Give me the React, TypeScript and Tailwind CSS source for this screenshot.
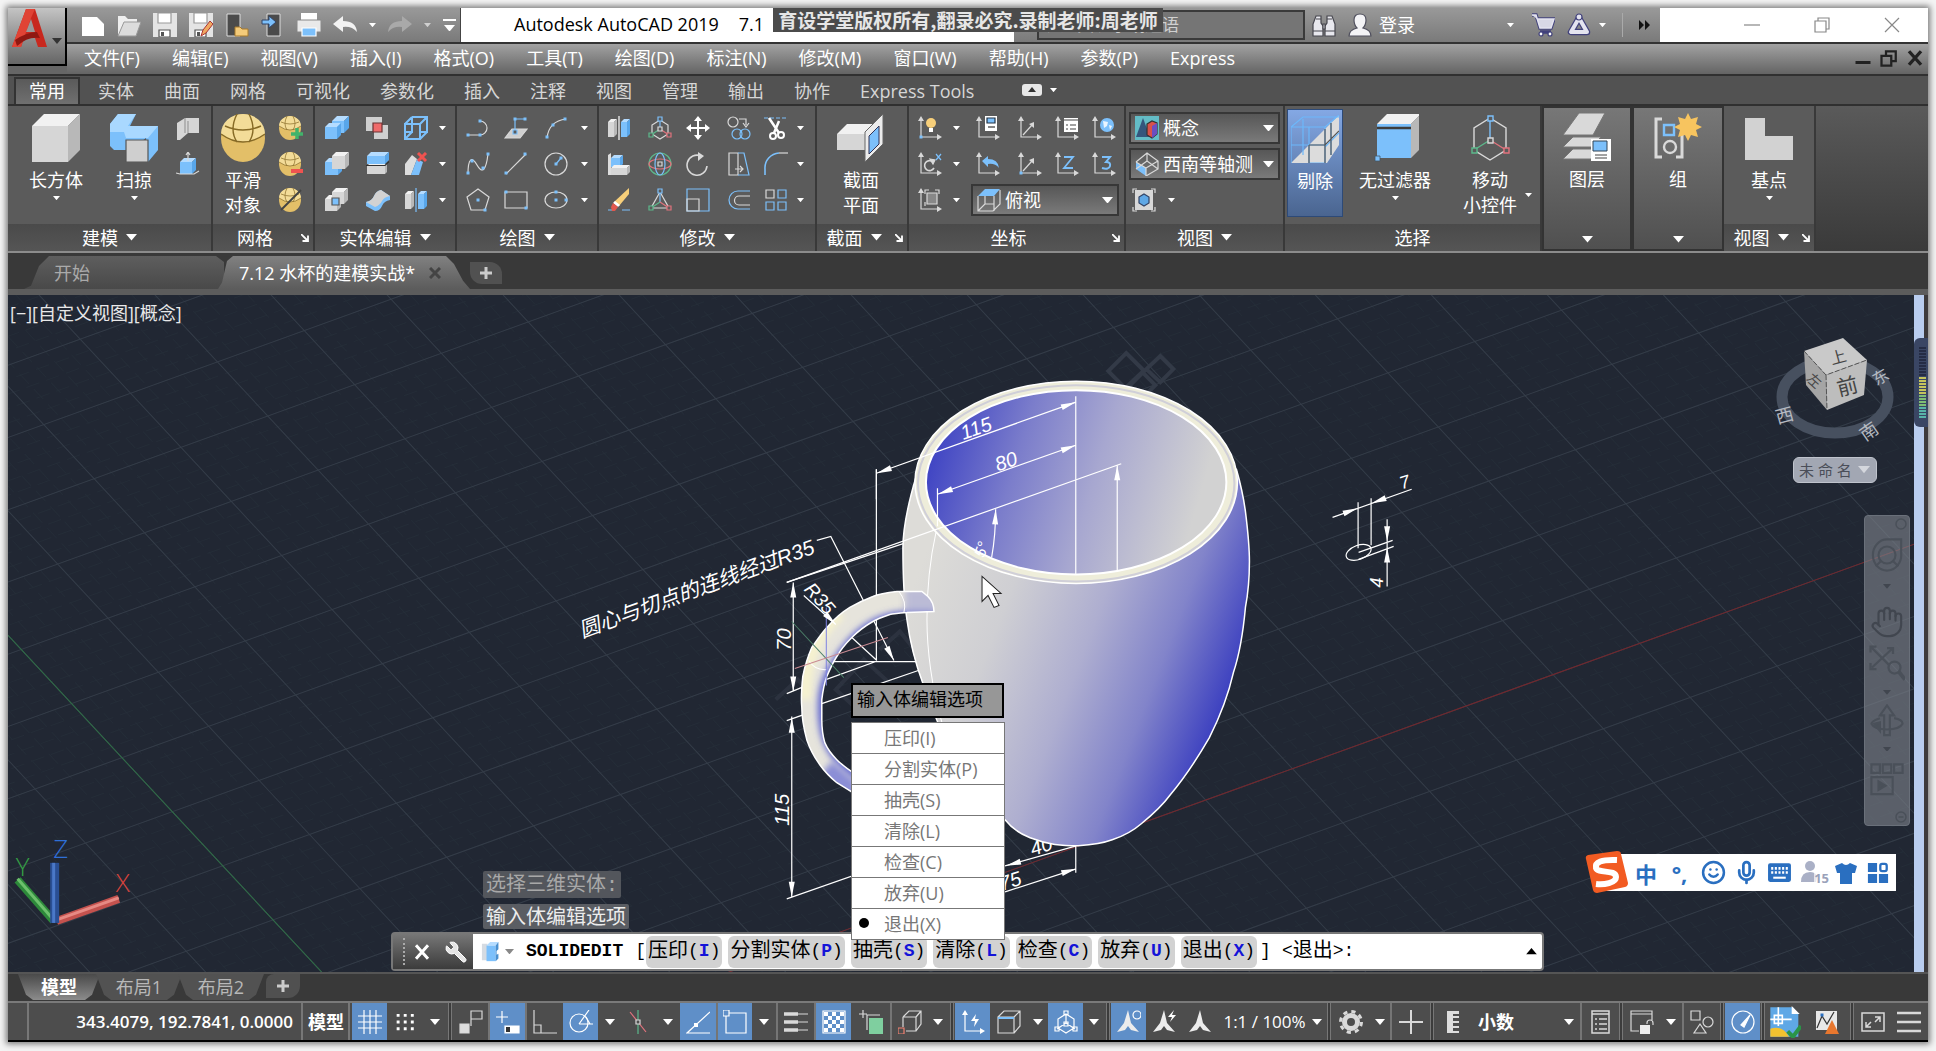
import type { ReactNode } from "react";
import { Wrench, Hand, Mic, Smile } from "lucide-react";

const BLUE = "#7cc0fb";
const GREY = "#d9d9d9";
const GOLD = "#e3bf68";

/* ---------- small building blocks ---------- */

function Ico({ children, className = "size-6", box = 24 }: { children: ReactNode; className?: string; box?: number }) {
  return (
    <svg viewBox={`0 0 ${box} ${box}`} className={`${className} shrink-0`} fill="none" stroke={GREY} strokeWidth={1.2} aria-hidden="true">
      {children}
    </svg>
  );
}

function Caret({ className = "w-2" }: { className?: string }) {
  return (
    <svg viewBox="0 0 10 6" className={`${className} shrink-0`} aria-hidden="true">
      <path d="M0 0h10L5 6z" fill="currentColor" />
    </svg>
  );
}

function Launcher() {
  return (
    <svg viewBox="0 0 8 8" className="size-2 shrink-0" aria-hidden="true">
      <path d="M0 0l6 6M7 1.500v5.500h-5.500" stroke="#fff" strokeWidth="1.800" fill="none" />
    </svg>
  );
}

function Tool({ label, children }: { label: string; children: ReactNode }) {
  return (
    <button type="button" aria-label={label} className="flex h-9 items-center justify-center">
      {children}
    </button>
  );
}

function CaretTool({ label }: { label: string }) {
  return (
    <Tool label={label}>
      <Caret className="w-[7px]" />
    </Tool>
  );
}

function Big({ icon, lines, caret, className }: { icon: ReactNode; lines: string[]; caret?: boolean; className: string }) {
  return (
    <button type="button" className={`flex flex-col items-center pt-2 leading-[25px] ${className}`}>
      {icon}
      <span className="mt-[6px] whitespace-nowrap">
        {lines.map((line) => (
          <span key={line} className="block">
            {line}
          </span>
        ))}
      </span>
      {caret && <Caret className="mt-[3px] w-[7px]" />}
    </button>
  );
}

interface PanelProps {
  title: string;
  caret?: boolean;
  launcher?: boolean;
  className: string;
  children: ReactNode;
}

function Panel({ title, caret, launcher, className, children }: PanelProps) {
  return (
    <section className={`flex shrink-0 flex-col border-r-2 border-[#393939] bg-[#5b5b5b] ${className}`}>
      <div className="flex flex-1">{children}</div>
      <div className="flex h-[27px] items-center justify-center gap-2 bg-linear-to-b from-[#4a4a4a] to-[#555] px-1">
        <span className={`flex items-center justify-center gap-2 ${launcher ? "flex-1" : ""}`}>
          {title}
          {caret && <Caret className="w-[11px]" />}
        </span>
        {launcher && <Launcher />}
      </div>
    </section>
  );
}

/* ---------- icon drawings ---------- */

const Doc = ({ fill = "#fff" }: { fill?: string }) => <path d="M1 4h15l7 7v12H1z" fill={fill} stroke="none" />;

const Floppy = () => (
  <>
    <path d="M0 0h24v24H0z" fill="#e4e4e4" stroke="none" />
    <path d="M5 0h13v10H5z" fill="#fff" stroke="#999" />
    <path d="M6 17h11v7H6z" fill="#fff" stroke="#555" />
    <path d="M8 19h3v4H8z" fill="#555" stroke="none" />
  </>
);

const Phone = () => <path d="M6 1h13v22H6z" fill="#4b4b4b" stroke="#ddd" strokeWidth="1" />;

const Cube = ({ x = 3, y = 3, s = 14, d = 4, f = "#d6d6d6", side = "#b8b8b8", top = "#f1f1f1" }) => (
  <g stroke="none">
    <path d={`M${x} ${y + d}h${s}v${s}h${-s}z`} fill={f} />
    <path d={`M${x} ${y + d}l${d} ${-d}h${s}l${-d} ${d}z`} fill={top} />
    <path d={`M${x + s} ${y + d}l${d} ${-d}v${s}l${-d} ${d}z`} fill={side} />
  </g>
);
const BlueCube = ({ x = 3, y = 3, s = 14, d = 4 }) => <Cube x={x} y={y} s={s} d={d} f="#7cc0fb" side="#58a6ea" top="#b5dcff" />;

/* flat slab: w wide, h high, with a skewed top and side */
const Slab = ({ x = 0, y = 0, w = 18, h = 8, d = 4, blue = false }) => (
  <g stroke="none">
    <path d={`M${x} ${y + d}h${w}v${h}h${-w}z`} fill={blue ? "#7cc0fb" : "#d6d6d6"} />
    <path d={`M${x} ${y + d}l${d} ${-d}h${w}l${-d} ${d}z`} fill={blue ? "#b5dcff" : "#f1f1f1"} />
    <path d={`M${x + w} ${y + d}l${d} ${-d}v${h}l${-d} ${d}z`} fill={blue ? "#58a6ea" : "#b8b8b8"} />
  </g>
);

const Egg = () => (
  <g stroke="none">
    <ellipse cx="11" cy="12" rx="11" ry="12" fill={GOLD} />
    <path d="M0 10a11 10 0 0122 0q-11 8-22 0z" fill="#f3dc98" />
    <path d="M0 10q11 8 22 0M8 0q-4 8 0 14M14 0q4 8 0 14M2 6q9 4 18 0" stroke="#866a26" strokeWidth="0.700" fill="none" />
  </g>
);

const Node = ({ x, y, c = BLUE }: { x: number; y: number; c?: string }) => <path d={`M${x - 1.5} ${y - 1.5}h3v3h-3z`} fill={c} stroke="none" />;
const Box = ({ x, y, c = BLUE }: { x: number; y: number; c?: string }) => <path d={`M${x - 2} ${y - 2}h4v4h-4z`} fill="#5b5b5b" stroke={c} />;

/* L-shaped axis pair that all the UCS tools share */
const Axes = () => (
  <>
    <path d="M3 3v18h18" />
    <path d="M0 5l3-5 3 5zM19 18l5 3-5 3z" fill={GREY} stroke="none" />
  </>
);

const Gizmo = () => (
  <>
    <path d="M12 4l8 5v9l-8 5-8-5V9z" />
    <path d="M12 3v10" stroke={BLUE} />
    <path d="M12 13l-9 6" stroke="#5cb98c" />
    <path d="M12 13l9 6" stroke="#e2737d" />
    <Box x={12} y={3} />
    <Box x={3} y={19} c="#5cb98c" />
    <Box x={21} y={19} c="#e2737d" />
    <Box x={12} y={13} c={GREY} />
  </>
);

const solidEditIcons: [string, ReactNode][] = [
  ["并集", <><BlueCube x={7} y={0} s={12} d={5} /><BlueCube x={0} y={7} s={12} d={4} /></>],
  ["干涉", <><path d="M0 1h16v14H0zM8 9h14v14H8z" fill="#cfcfcf" stroke="none" /><path d="M7 7h9v9H7z" fill="#ef6a6a" stroke="#6b3333" /></>],
  ["提取边", <path d="M1 8h15v15H1zM8 1h15v15h-7M1 8l7-7M16 8l7-7M16 23l7-7M8 1v15H1M8 16l-7 7" stroke={BLUE} strokeWidth="2" />],
  ["差集", <><BlueCube x={0} y={6} s={13} /><Cube x={7} y={0} s={13} /></>],
  ["剖切", <><Slab x={1} y={12} h={8} d={2} /><Slab x={1} y={0} h={8} blue /><path d="M0 13.500h19l4-4" stroke="#333" /></>],
  ["删除面", <><path d="M1 23V12l7-9 5 4-6 16z" fill="#ddd" stroke="none" /><path d="M7 23l6-16 6 3-4 13z" fill={BLUE} stroke="none" /><path d="M14 1l8 8M22 1l-8 8" stroke="#ef5350" strokeWidth="3" /></>],
  ["交集", <><Cube x={0} y={7} s={12} /><Cube x={7} y={0} s={12} /><path d="M7 10h7v7H7z" fill={BLUE} stroke="#555" /></>],
  ["加厚", <><path d="M0 14q6-1 8-6t7-6l9 6v4q-6 1-8 6t-7 5l-9-5z" fill={BLUE} stroke="none" /><path d="M0 14q6-1 8-6t7-6l9 6q-6 1-8 5t-7 6z" fill="#d2d2d2" stroke="none" /></>],
  ["分割", <><Slab x={1} y={3} w={6} h={15} d={3} /><Slab x={14} y={3} w={6} h={15} d={3} blue /><path d="M12 0v24" stroke={BLUE} /></>],
];

const drawIcons: [string, ReactNode][] = [
  ["多段线", <><path d="M2 19h12a7 7 0 000-14" /><Node x={2} y={19} /><Node x={14} y={19} /><Node x={14} y={5} /></>],
  ["拉伸面", <><path d="M1 22l7-9h15l-7 9z" fill="#cfcfcf" /><path d="M11 17V3h11" stroke={BLUE} /><Node x={11} y={3} /><Node x={21} y={3} /><Box x={11} y={16} /></>],
  ["圆弧", <><path d="M3 22Q5 5 22 3" /><Node x={3} y={21} /><Node x={9} y={9} /><Node x={21} y={3} /></>],
  ["样条曲线", <><path d="M2 22C2 6 6 4 11 13s9 6 11-11" /><Node x={2} y={21} /><Node x={6} y={9} /><Node x={17} y={16} /><Node x={22} y={2} /></>],
  ["直线", <><path d="M2 22L22 2" /><Node x={2} y={21} /><Node x={21} y={2} /></>],
  ["圆", <><circle cx="12" cy="12" r="11" /><path d="M12 12l5-6" stroke={BLUE} /><Node x={12} y={12} /><Node x={17} y={6} /></>],
  ["多边形", <><path d="M12 1l11 8-4 13H5L1 9z" /><Node x={12} y={12} /><Node x={19} y={22} /></>],
  ["矩形", <><path d="M1 4h22v16H1z" /><Node x={2} y={4} /><Node x={22} y={20} /></>],
  ["椭圆", <><ellipse cx="12" cy="12" rx="11" ry="8" /><Node x={12} y={12} /><Node x={12} y={4} /><Node x={22} y={12} /></>],
];

const modifyIcons: [string, ReactNode][] = [
  ["三维镜像", <><Slab x={1} y={3} w={6} h={15} d={3} /><Slab x={14} y={3} w={6} h={15} d={3} blue /><path d="M12 0v24" stroke="#fff" /></>],
  ["三维移动", <Gizmo />],
  ["移动", <path d="M12 0l4 5h-3v6h6V8l5 4-5 4v-3h-6v6h3l-4 5-4-5h3v-6H5v3l-5-4 5-4v3h6V5H8z" fill="#fff" stroke="none" />],
  ["复制", <><circle cx="6" cy="6" r="5" /><path d="M12 3h7v6M16 7l3 4 3-4" /><circle cx="10" cy="18" r="5" stroke={BLUE} /><circle cx="18" cy="18" r="5" stroke={BLUE} /></>],
  ["修剪", <><path d="M0 2h24" stroke={BLUE} strokeDasharray="4 2" /><path d="M5 2l10 15M15 5l-5 12" stroke="#fff" strokeWidth="2.500" /><circle cx="9" cy="20" r="3" stroke="#fff" strokeWidth="2" /><circle cx="17" cy="19" r="3" stroke="#fff" strokeWidth="2" /></>],
  ["三维对齐", <><path d="M1 3v20h3V1z" fill="#ddd" stroke="none" /><BlueCube x={4} y={3} s={9} d={3} /><Slab x={4} y={13} w={16} h={7} d={3} /></>],
  ["三维旋转", <><circle cx="12" cy="12" r="11" stroke="#5cb98c" /><ellipse cx="12" cy="12" rx="11" ry="5" stroke="#e2737d" /><ellipse cx="12" cy="12" rx="5" ry="11" stroke={BLUE} /><Box x={12} y={12} c={GREY} /></>],
  ["旋转", <><path d="M15 4A10 10 0 1021 14" strokeWidth="1.600" /><path d="M12 0l6 4-6 5z" fill={GREY} stroke="none" /></>],
  ["拉伸", <><path d="M2 1h9v22H2zM8 17h8M13 14l3 3-3 3" /><path d="M11 1h6l5 22H11" stroke={BLUE} /></>],
  ["圆角", <><path d="M1 23V17A15 15 0 0115 1" stroke={BLUE} strokeWidth="1.600" /><path d="M15 1h9" /></>],
  ["删除", <><path d="M1 22h5M15 22h8" stroke={BLUE} /><path d="M22 0v6L12 18l-5-4z" fill="#f7cf7a" stroke="none" /><path d="M8 13l5 4-2 2-5-4z" fill="#fff" stroke="none" /><path d="M6 15l5 4-3 4H5l-1-4z" fill="#e2574d" stroke="none" /></>],
  ["三维缩放", <><path d="M12 4L3 20h18z" /><path d="M12 4v10" stroke={BLUE} /><path d="M12 14l-9 6" stroke="#5cb98c" /><path d="M12 14l9 6" stroke="#e2737d" /><Box x={12} y={3} /><Box x={3} y={20} c="#5cb98c" /><Box x={21} y={20} c="#e2737d" /></>],
  ["缩放", <><path d="M1 1h22v22H1z" stroke={BLUE} /><path d="M1 11h12v12H1z" /></>],
  ["偏移", <><path d="M23 3H11a9 9 0 000 18h12" stroke={BLUE} /><path d="M23 8H12a4.500 4.500 0 000 9h11" /></>],
  ["阵列", <><path d="M2 2h8v8H2z" /><path d="M14 2h8v8h-8zM2 14h8v8H2zM14 14h8v8h-8z" stroke={BLUE} /></>],
];

const ucsIcons: [string, ReactNode][] = [
  ["UCS 图标", <><Axes /><circle cx="13" cy="7" r="5" fill="#f7cf7a" stroke="none" /><path d="M11 12h4v4h-4z" fill="#fff" stroke="none" /><Node x={3} y={21} /></>],
  ["命名 UCS", <><Axes /><path d="M9 0h12v15H9z" fill="#fff" stroke="none" /><path d="M11 2h8v5h-8z" fill={BLUE} stroke="#234" /><path d="M12 11h7" stroke="#333" /></>],
  ["视图 UCS", <><Axes /><path d="M5 19l9-10" /><path d="M16 6v6l-5-4z" fill={GREY} stroke="none" /></>],
  ["UCS 列表", <><Axes /><path d="M9 2h14v14H9z" fill="#fff" stroke="none" /><path d="M9 4h14M11 9h2M15 9h6M11 13h2M15 13h6" stroke="#444" /></>],
  ["世界", <><Axes /><circle cx="15" cy="9" r="7" fill={BLUE} stroke="none" /><path d="M11 5l5 1-1 4-3 2zM17 9l3 1-2 4z" fill="#e9f5ff" stroke="none" /></>],
  ["X", <><Axes /><path d="M15 10a5 5 0 101 6" strokeWidth="1.600" /><path d="M12 7l5 1-2 4z" fill={GREY} /><path d="M18 2l5 6M23 2l-5 6" stroke={BLUE} /></>],
  ["上一个", <><Axes /><path d="M6 9l6-5v3q10 0 11 9-4-5-11-4v3z" fill={BLUE} stroke="none" /></>],
  ["原点", <><Axes /><path d="M5 19l9-10" /><path d="M16 6v6l-5-4z" fill={GREY} stroke="none" /><Node x={3} y={21} /></>],
  ["Z 轴矢量", <><Axes /><path d="M9 5h9l-9 11h9" stroke={BLUE} strokeWidth="1.800" /></>],
  ["三点", <><Axes /><path d="M10 5h8l-4 5q5 0 4 4t-8 2" stroke={BLUE} strokeWidth="2" /></>],
];

/* ---------- header ---------- */

const menus = ["文件(F)", "编辑(E)", "视图(V)", "插入(I)", "格式(O)", "工具(T)", "绘图(D)", "标注(N)", "修改(M)", "窗口(W)", "帮助(H)", "参数(P)", "Express"];
const ribbonTabs = ["常用", "实体", "曲面", "网格", "可视化", "参数化", "插入", "注释", "视图", "管理", "输出", "协作", "Express Tools"];

function QuickAccess() {
  const items: [string, ReactNode][] = [
    ["新建", <Doc />],
    ["打开", <><path d="M1 22V3h7l3 3h9v4" fill="#eee" stroke="none" /><path d="M1 23L7 9h17l-5 14z" fill="#dcdcdc" stroke="#999" strokeWidth="1" /></>],
    ["保存", <Floppy />],
    ["另存为", <><Floppy /><path d="M12 23l2-6 7-9 3 3-7 9z" fill="#f0a860" stroke="#a33" strokeWidth="1" /></>],
    ["从移动设备打开", <><g transform="translate(-4)"><Phone /></g><path d="M10 14h5l2 2h6v7H10z" fill="#f4cb7a" stroke="#a87a2c" strokeWidth="1" /></>],
    ["保存到移动设备", <><Phone /><path d="M1 7h7V3l7 6-7 6v-4H1z" fill={BLUE} stroke="#346" strokeWidth="1" /></>],
    ["打印", <><path d="M4 0h16v7H4z" fill="#fff" stroke="none" /><path d="M0 7h24v12H0z" fill="#e9e9e9" stroke="#888" strokeWidth="1" /><path d="M5 15h14v8H5z" fill={BLUE} stroke="#fff" /></>],
    ["放弃", <path d="M0 11l10-8v5q13 0 14 11-5-6-14-5v5z" fill="#f2f2f2" stroke="none" />],
  ];
  return (
    <div className="flex w-[393px] shrink-0 items-center pl-[14px] text-white">
      {items.map(([label, icon]) => (
        <button key={label} type="button" aria-label={label} className="mr-3">
          <Ico>{icon}</Ico>
        </button>
      ))}
      <Caret className="w-[7px]" />
      <button type="button" aria-label="重做" className="mx-3">
        <Ico>
          <path d="M24 11L14 3v5Q1 8 0 19q5-6 14-5v5z" fill="#a9a9a9" stroke="none" />
        </Ico>
      </button>
      <Caret className="w-[7px] text-[#d0d0d0]" />
      <button type="button" aria-label="自定义快速访问工具栏" className="ml-3 flex w-[13px] flex-col items-center gap-1">
        <span className="h-[2px] w-full bg-white" />
        <Caret className="w-[11px]" />
      </button>
    </div>
  );
}

function TitleBar() {
  return (
    <div className="relative flex h-[34px] bg-linear-to-b from-[#999] to-[#7a7a7a]">
      <QuickAccess />
      <h1 className="flex w-[554px] shrink-0 gap-[20px] border-l border-[#444] bg-white pl-[53px] text-[18px] leading-[32px] whitespace-nowrap text-black">
        <span>Autodesk AutoCAD 2019</span>
        <span>7.1</span>
      </h1>
      <input
        aria-label="搜索"
        placeholder="键入关键字或短语"
        className="my-[2px] ml-[23px] w-[268px] shrink-0 border-2 border-[#3a3a3a] bg-[#757575] px-1 text-[17px] placeholder:text-[#d0d0d0]"
      />
      <div className="flex flex-1 items-center pl-[7px] text-white">
        <Ico>
          <g fill="#e8e8ee" stroke="#46464e">
            <path d="M4 3h5v7l2 3v10H1V11z" />
            <path d="M20 3h-5v7l-2 3v10h10V11z" />
            <path d="M11 11h2v5h-2z" />
            <path d="M1 18h10M13 18h10M4 6h5M15 6h5" />
          </g>
        </Ico>
        <Ico className="ml-3 size-6">
          <path d="M1 23q0-6 8-8-3-3-3-8 0-6 6-6t6 6q0 5-3 8 8 2 8 8z" fill="#f3f3f6" stroke="#50505e" />
        </Ico>
        <a href="#login" className="ml-[7px] text-[18px]">登录</a>
        <Caret className="ml-[92px] w-[7px]" />
        <Ico className="ml-[17px] size-6">
          <path d="M1 2h4l4 13h11l3-9H6M9 19h11" stroke="#42427c" strokeWidth="3.500" />
          <path d="M1 2h4l4 13h11l3-9H6" stroke="#e4e4f0" strokeWidth="1.500" fill="#d8d8e6" />
          <circle cx="10" cy="21" r="2" fill="#fff" stroke="#42427c" />
          <circle cx="19" cy="21" r="2" fill="#fff" stroke="#42427c" />
        </Ico>
        <Ico className="ml-3 size-6">
          <path d="M12 5L4 19h16z" stroke="#42427c" strokeWidth="6.500" strokeLinejoin="round" />
          <path d="M12 5L4 19h16z" stroke="#e4e4f0" strokeWidth="4" strokeLinejoin="round" />
          <circle cx="12" cy="4" r="3" fill="#e4e4f0" stroke="#42427c" />
        </Ico>
        <Caret className="ml-2 w-[7px]" />
        <span className="mx-4 h-6 w-px bg-[#aaa]" />
        <svg viewBox="0 0 12 10" className="w-3" aria-hidden="true">
          <path d="M0 0l5 5-5 5zM6 0l5 5-5 5z" fill="#111" />
        </svg>
      </div>
      <div className="flex w-[268px] shrink-0 items-center justify-end gap-[54px] bg-white pr-[28px]">
        <button type="button" aria-label="最小化"><Ico className="size-4" box={16}><path d="M0 8h16" stroke="#888" /></Ico></button>
        <button type="button" aria-label="还原"><Ico className="size-4" box={16}><path d="M1 4h11v11H1zM4 4V1h11v11h-3" stroke="#888" /></Ico></button>
        <button type="button" aria-label="关闭"><Ico className="size-4" box={16}><path d="M1 1l14 14M15 1L1 15" stroke="#888" /></Ico></button>
      </div>
      <p className="absolute top-0 left-[706px] flex h-6 w-[390px] items-center justify-center bg-[#4b4b4b] font-['Noto_Sans_CJK_SC',sans-serif] text-[19px] font-bold whitespace-nowrap text-[#e6e6e6]">
        育设学堂版权所有,翻录必究.录制老师:周老师
      </p>
    </div>
  );
}

function Header() {
  return (
    <header className="flex bg-[#666]">
      <button
        type="button"
        aria-label="应用程序菜单"
        className="z-10 flex h-[58px] w-[59px] shrink-0 items-start border-r-2 border-b-2 border-black bg-linear-to-b from-[#c4c4c4] to-[#666] pl-1 text-[#333]"
      >
        <svg viewBox="0 0 36 40" className="w-9" aria-hidden="true">
          <path d="M14 1h9l12 38h-9l-3-9H12L9 39H0z" fill="#c8281e" />
          <path d="M14 1h9l-4 9-7 20L9 39H0z" fill="#e04335" />
          <path d="M19 11l4 13H14z" fill="#9a9a9a" />
          <path d="M3 32q12-8 22-8l3 6q-12-2-23 8z" fill="#8f1812" />
        </svg>
        <Caret className="mt-[30px] ml-1 w-[10px]" />
      </button>
      <div className="flex min-w-0 flex-1 flex-col">
        <TitleBar />
        <nav className="flex h-[32px] items-center gap-[32px] border-t-2 border-[#333] bg-linear-to-b from-[#a2a2a2] to-[#646464] pb-[3px] pl-[17px] text-[18px] leading-none text-white">
          {menus.map((menu) => (
            <button key={menu} type="button" className="whitespace-nowrap">{menu}</button>
          ))}
          <span className="ml-auto flex gap-2 pr-1">
            <Ico className="size-[18px]"><path d="M2 18h20" stroke="#222" strokeWidth="4" /></Ico>
            <Ico className="size-[18px]"><path d="M2 9h13v13H2zM8 8V3h13v13h-5" stroke="#222" strokeWidth="3" /></Ico>
            <Ico className="size-[18px]"><path d="M4 3l16 18M20 3L4 21" stroke="#222" strokeWidth="4.500" /></Ico>
          </span>
        </nav>
      </div>
    </header>
  );
}

function RibbonTabs() {
  return (
    <nav className="flex h-[32px] items-end border-t-2 border-b-2 border-[#303030] bg-[#525252] pl-[6px] text-[18px] leading-[25px] text-[#d6d6d6]">
      {ribbonTabs.map((tab, i) => (
        <button
          key={tab}
          type="button"
          className={
            i === 0
              ? "mr-[3px] border-2 border-b-0 border-[#333] bg-linear-to-b from-[#5a5a5a] to-[#707070] px-[13px] text-white"
              : "px-[15px] whitespace-nowrap"
          }
        >
          {tab}
        </button>
      ))}
      <span className="flex h-full items-center gap-2 pl-[33px] text-white">
        <svg viewBox="0 0 20 12" className="w-5" aria-hidden="true">
          <rect width="20" height="12" rx="3" fill="#e8e8e8" />
          <path d="M6 8l4-5 4 5z" fill="#333" />
        </svg>
        <Caret className="w-[7px]" />
      </span>
    </nav>
  );
}

/* ---------- ribbon ---------- */

function Combo({ label, options, icon, className }: { label: string; options: string[]; icon: ReactNode; className: string }) {
  return (
    <label className={`flex h-[32px] items-center gap-1 border-2 border-[#373737] bg-linear-to-b from-[#575757] to-[#7a7a7a] pl-1 ${className}`}>
      {icon}
      <select aria-label={label} className="min-w-0 flex-1 appearance-none bg-transparent leading-none text-white outline-none">
        {options.map((o) => (
          <option key={o}>{o}</option>
        ))}
      </select>
      <Caret className="mr-1 w-[11px]" />
    </label>
  );
}

function IconRows({ icons, cols, className }: { icons: [string, ReactNode][]; cols: number; className: string }) {
  return (
    <div className={`grid content-start pt-1 ${className}`}>
      {icons.map(([label, icon], i) => (
        <div key={label} className="contents">
          <Tool label={label}><Ico>{icon}</Ico></Tool>
          {i % cols === cols - 1 && <CaretTool label={`${label}选项`} />}
        </div>
      ))}
    </div>
  );
}

function Ribbon() {
  return (
    <div className="flex h-[147px] overflow-hidden border-b-2 border-[#8c8c8c] bg-linear-to-b from-[#5a5a5a] to-[#3a3a3a] text-[18px] leading-none text-white">
      <Panel title="建模" caret className="w-[205px]">
        <Big
          className="w-[96px]"
          lines={["长方体"]}
          caret
          icon={<Ico className="size-12"><Cube x={0} y={0} s={18} d={6} /></Ico>}
        />
        <Big
          className="w-[60px]"
          lines={["扫掠"]}
          caret
          icon={
            <Ico className="size-12">
              <path d="M0 5l4-5h9l-3 6h14v12l-5 6-1-12-8 6H2l-2-2z" fill={BLUE} stroke="none" />
              <path d="M0 5l4-5h9l-4 6h15l-5 6H8l-1-3H0z" fill="#a9d8ff" stroke="none" />
              <path d="M8 13h11v11H8z" fill="#cfcfcf" stroke="#555" strokeWidth="0.600" />
            </Ico>
          }
        />
        <div className="flex w-[47px] flex-col pt-1">
          <Tool label="多段体"><Ico><path d="M1 7l8-5h14v15H12l-8 7H1z" fill="#d6d6d6" stroke="none" /><path d="M9 2v15M12 5v12" stroke="#999" /></Ico></Tool>
          <Tool label="按住并拖动"><Ico><BlueCube x={4} y={6} s={12} /><path d="M0 21l4 1h14l5-3M12 9V1M10 3l2-3 2 3" /></Ico></Tool>
        </div>
      </Panel>

      <Panel title="网格" launcher className="w-[102px]">
        <Big
          className="w-[60px]"
          lines={["平滑", "对象"]}
          icon={<Ico className="size-12"><g transform="translate(1)"><Egg /></g></Ico>}
        />
        <div className="flex w-[36px] flex-col pt-1">
          <Tool label="提高平滑度"><Ico><Egg /><path d="M18 12v11M12 18h12" stroke="#41b36b" strokeWidth="3.500" /></Ico></Tool>
          <Tool label="降低平滑度"><Ico><Egg /><path d="M12 19h12" stroke="#ef5350" strokeWidth="4" /></Ico></Tool>
          <Tool label="优化网格"><Ico><Egg /><path d="M2 22L22 2" stroke="#444" strokeWidth="2" /></Ico></Tool>
        </div>
      </Panel>

      <Panel title="实体编辑" caret className="w-[142px]">
        <IconRows icons={solidEditIcons} cols={3} className="grid-cols-[44px_38px_38px_14px]" />
      </Panel>

      <Panel title="绘图" caret className="w-[142px]">
        <IconRows icons={drawIcons} cols={3} className="grid-cols-[42px_34px_46px_10px]" />
      </Panel>

      <Panel title="修改" caret className="w-[218px]">
        <IconRows icons={modifyIcons} cols={5} className="grid-cols-[40px_42px_34px_48px_26px_22px]" />
      </Panel>

      <Panel title="截面" caret launcher className="w-[92px]">
        <Big
          className="w-[88px]"
          lines={["截面", "平面"]}
          icon={
            <Ico className="size-12">
              <Slab x={0} y={5} w={14} h={8} d={5} />
              <path d="M14 9l9-9v15l-9 9z" fill="#ececec" stroke="#666" strokeWidth="0.500" />
              <path d="M16 11l5-5v9l-5 5z" fill={BLUE} stroke="#335" strokeWidth="0.500" />
            </Ico>
          }
        />
      </Panel>

      <Panel title="坐标" launcher className="w-[217px]">
        <div className="grid grid-cols-[42px_10px_54px_30px_44px_30px] content-start pt-1">
          {ucsIcons.map(([label, icon], i) => (
            <div key={label} className="contents">
              <Tool label={label}><Ico>{icon}</Ico></Tool>
              {i % 5 === 0 && <CaretTool label={`${label}选项`} />}
            </div>
          ))}
          <Tool label="三维 UCS"><Ico><Axes /><path d="M9 5h10v11H9z" fill="#888" /><path d="M7 6V2h4M17 2h4v4M7 14v4" /></Ico></Tool>
          <CaretTool label="三维 UCS 选项" />
          <Combo
            label="UCS"
            options={["俯视"]}
            className="col-span-4 ml-[10px] self-center"
            icon={<Ico><path d="M1 8L8 1h15l-6 7z" fill={BLUE} stroke="none" /><path d="M1 8v15h15l7-7V2M17 8v15M8 8v8L1 23M8 16h9" /></Ico>}
          />
        </div>
      </Panel>

      <Panel title="视图" caret className="w-[159px]">
        <div className="flex w-full flex-col gap-1 px-[3px] pt-[6px]">
          <Combo
            label="视觉样式"
            options={["概念"]}
            className="w-full"
            icon={<Ico><path d="M0 0h24v24H0z" fill="#63bcc6" stroke="none" /><path d="M8 2l7 19H1z" fill="#35567c" stroke="none" /><path d="M12 8l5-3 5 2v11l-5 4-5-3z" fill="#d8524a" stroke="#333" /><path d="M17 10v12l5-4V7z" fill="#6b4ec0" stroke="none" /></Ico>}
          />
          <Combo
            label="三维导航"
            options={["西南等轴测"]}
            className="w-full"
            icon={<Ico><path d="M1 10l10 6v8L1 17z" fill={BLUE} stroke="none" /><path d="M1 10L12 1l11 8v8l-12 7V16L1 10M11 16l12-7M12 1v8l11 8M12 9L1 17" /></Ico>}
          />
          <div className="flex h-8 items-center gap-3 pl-[3px]">
            <Ico><path d="M3 2h18v20H3z" fill="#d8d8d8" stroke="none" /><path d="M7 9l5-3 5 3v6l-5 3-5-3z" fill="#5fa8e6" stroke="#346" /><path d="M1 5V1h4M19 1h4v4M23 19v4h-4M5 23H1v-4" /></Ico>
            <Caret className="w-[7px]" />
          </div>
        </div>
      </Panel>

      <Panel title="选择" className="w-[257px]">
        <Big
          className="mt-[3px] ml-[2px] h-[108px] w-[56px] border border-[#2d4a78] bg-linear-to-b from-[#84a8e4] to-[#4a6590] pt-[5px]"
          lines={["剔除"]}
          icon={
            <Ico className="size-12">
              <path d="M0 24L24 0v15l-6 9z" fill="#dcdcdc" stroke="none" />
              <path d="M0 6h17M0 6v18M6 2v18M0 15h18M0 6l6-5h18M9 6v18M17 6v18h-8M20 4v16M17 6l7-6M17 16l7-7" stroke="#6cb8fb" strokeWidth="0.600" />
              <path d="M9 15v9M17 7v17M9 15h8l7-7M20 4v16" stroke="#555" strokeWidth="0.600" />
            </Ico>
          }
        />
        <Big
          className="w-[104px]"
          lines={["无过滤器"]}
          caret
          icon={
            <Ico className="size-12">
              <Cube x={3} y={0} s={17} d={5} />
              <path d="M3 5h17v17H3z" fill={BLUE} stroke="none" />
              <path d="M3 7h17" stroke="#3d3d3d" strokeWidth="1.200" />
              <path d="M2 21h2.500v2.500H2z" fill={BLUE} stroke="#456" strokeWidth="0.400" />
            </Ico>
          }
        />
        <Big
          className="ml-2 w-[70px]"
          lines={["移动", "小控件"]}
          icon={
            <Ico className="size-12">
              <g strokeWidth="0.700">
                <path d="M12 2l8 5v11l-8 5-8-5V7z" />
                <path d="M12 2v11" stroke={BLUE} />
                <path d="M12 13l-8 5" stroke="#5cb98c" />
                <path d="M12 13l8 5" stroke="#e2737d" />
                <path d="M11 1h2.500v2.500H11z" fill="#5b5b5b" stroke={BLUE} />
                <path d="M3 17h2.500v2.500H3z" fill="#5b5b5b" stroke="#5cb98c" />
                <path d="M19 17h2.500v2.500H19z" fill="#5b5b5b" stroke="#e2737d" />
                <path d="M11 12h2.500v2.500H11z" fill="#5b5b5b" />
              </g>
            </Ico>
          }
        />
        <Caret className="w-[7px] pt-[60px]" />
      </Panel>

      <section className="flex w-[90px] shrink-0 flex-col items-center border-2 border-[#333] bg-linear-to-b from-[#777] to-[#505050]">
        <Big
          className="w-full flex-1 pt-[5px]"
          lines={["图层"]}
          icon={
            <Ico className="size-12">
              <path d="M0 23l5-5h14l-5 5zM0 17l5-5h14l-5 5zM0 11L8 0h13l-6 11z" fill="#d9d9d9" stroke="#777" strokeWidth="0.500" />
              <path d="M14 13h10v11H14z" fill="#fff" stroke="none" />
              <path d="M15 14h7v5h-7z" fill={BLUE} stroke="#345" strokeWidth="0.500" />
              <path d="M16 21h6M16 22.500h6" stroke="#444" strokeWidth="0.500" />
            </Ico>
          }
        />
        <Caret className="mb-[6px] w-[11px]" />
      </section>
      <section className="flex w-[92px] shrink-0 flex-col items-center border-2 border-[#333] bg-linear-to-b from-[#777] to-[#505050]">
        <Big
          className="w-full flex-1 pt-[5px]"
          lines={["组"]}
          icon={
            <Ico className="size-12">
              <path d="M4 3H1v19h3M11 22h3V11" strokeWidth="1.500" />
              <path d="M5 6h5v5H5z" stroke={BLUE} />
              <circle cx="8" cy="17" r="3" />
              <path d="M17 0l1.500 3L22 2l-1 3.500 3 1.500-3 1.500 1 3.500-3.500-1L17 14l-1.500-3-3.500 1 1-3.500-3-1.500 3-1.500-1-3.500 3.500 1z" fill="#f7c45f" stroke="none" />
            </Ico>
          }
        />
        <Caret className="mb-[6px] w-[11px]" />
      </section>

      <Panel title="视图" caret launcher className="w-[92px]">
        <Big
          className="w-full"
          lines={["基点"]}
          caret
          icon={<Ico className="size-12"><path d="M0 2h10v9h14v12H0z" fill="#d2d2d2" stroke="none" /></Ico>}
        />
      </Panel>
    </div>
  );
}

function FileTabs() {
  return (
    <div className="flex h-[42px] shrink-0 items-end border-b-[6px] border-[#5c5c5c] bg-[#393939] pl-[16px] text-[18px] leading-[32px]">
      <button
        type="button"
        className="h-[33px] w-[200px] bg-linear-to-b from-[#5e5e5e] to-[#494949] pl-[30px] text-left text-[#aaa] [clip-path:polygon(0_100%,7px_90%,15px_30%,19px_6px,25px_0,calc(100%-8px)_0,100%_6px,100%_100%)]"
      >
        开始
      </button>
      <div className="-ml-[6px] flex h-[33px] w-[252px] items-center bg-linear-to-b from-[#818181] to-[#5c5c5c] pl-[21px] text-white [clip-path:polygon(0_100%,4px_80%,9px_15%,15px_0,calc(100%-24px)_0,calc(100%-16px)_8px,calc(100%-7px)_75%,100%_100%)]">
        <button type="button" className="whitespace-nowrap">7.12 水杯的建模实战*</button>
        <button type="button" aria-label="关闭图形" className="ml-[14px]">
          <Ico className="size-3"><path d="M2 2l20 20M22 2L2 22" stroke="#444" strokeWidth="6" /></Ico>
        </button>
      </div>
      <button type="button" aria-label="新图形" className="mb-[5px] flex h-[22px] w-[32px] items-center justify-center rounded-tr-xl rounded-bl-xl bg-[#515151]">
        <Ico className="size-3"><path d="M12 0v24M0 12h24" stroke="#ccc" strokeWidth="6" /></Ico>
      </button>
    </div>
  );
}

/* ---------- drawing area ---------- */

const ORIGIN = [425, 1082];
const STEP_X = [86.7, -31.3];
const STEP_Y = [50.3, 54];

function gridLine(along: number[], across: number[], n: number) {
  const x = ORIGIN[0] + across[0] * n;
  const y = ORIGIN[1] + across[1] * n;
  return `M${x - along[0] * 40} ${y - along[1] * 40}L${x + along[0] * 40} ${y + along[1] * 40}`;
}

function GridLines() {
  const steps = Array.from({ length: 190 }, (_, i) => (i - 95) / 5);
  const major = steps.filter((n) => Number.isInteger(n));
  const path = (list: number[]) => list.map((n) => gridLine(STEP_X, STEP_Y, n) + gridLine(STEP_Y, STEP_X, n)).join("");
  return (
    <g fill="none" strokeWidth="1">
      <path d={path(steps)} stroke="#252d38" strokeDasharray="14 7" />
      <path d={path(major)} stroke="#343c48" />
      <path d={gridLine(STEP_X, STEP_Y, 0)} stroke="#73272d" />
      <path d={gridLine(STEP_Y, STEP_X, 0)} stroke="#2f6e46" />
    </g>
  );
}

/* filled dimension arrow head with its tip at x, y */
function Arrow({ x, y, a }: { x: number; y: number; a: number }) {
  return <path d="M0 0L-15 3V-3z" fill="#fff" stroke="none" transform={`translate(${x} ${y}) rotate(${a})`} />;
}

function DimText({ x, y, a, children, size = 20 }: { x: number; y: number; a: number; children: string; size?: number }) {
  return (
    <text
      transform={`translate(${x} ${y}) rotate(${a})`}
      textAnchor="middle"
      dominantBaseline="central"
      fontSize={size}
      fontStyle="italic"
      fill="#fff"
      stroke="none"
      fontFamily="'Liberation Sans', 'Noto Sans CJK SC', sans-serif"
    >
      {children}
    </text>
  );
}

const BODY =
  "M916 478C908 505 903 530 903 549C903 575 904 600 907 620C911 650 917 668 923 684C938 728 956 765 976 791C990 808 998 815 1005 820C1012 829 1020 834 1030 838C1048 845 1062 846 1078 846C1092 845 1104 843 1112 840C1124 836 1133 831 1141 824C1152 815 1162 806 1170 795C1186 776 1198 757 1209 738C1220 716 1228 695 1233 673C1240 652 1243 630 1245 608C1248 592 1249 577 1249 562C1249 545 1247 528 1245 512C1243 497 1240 484 1236 470z";
const HANDLE =
  "M934 612C934 606 932 601 928 597L922 592H897C888 593 880 594 873 597C865 600 857 604 850 608C842 613 834 620 828 627C822 633 817 641 812 648C808 657 805 667 803 677C802 687 801 697 802 707C802 718 804 729 807 740C810 749 815 758 820 765C825 772 831 778 837 783L858 796V776C850 771 843 766 837 760C832 755 828 750 825 743C823 736 822 728 822 720V700C823 692 824 685 827 677C830 670 833 663 837 657C841 650 846 644 852 638C858 632 866 626 873 622C878 619 884 617 890 615C896 614 901 613 907 613z";

function Drawing() {
  return (
    <svg viewBox="8 296 1906 676" preserveAspectRatio="xMidYMid slice" className="absolute inset-0 size-full" aria-label="水杯模型">
      <defs>
        <linearGradient id="body" gradientUnits="userSpaceOnUse" x1="925" y1="555" x2="1235" y2="675">
          <stop offset="0" stopColor="#dddcd8" />
          <stop offset="0.28" stopColor="#cfcfd3" />
          <stop offset="0.55" stopColor="#aeaed0" />
          <stop offset="0.78" stopColor="#8284ca" />
          <stop offset="1" stopColor="#3d41c0" />
        </linearGradient>
        <linearGradient id="inside" gradientUnits="userSpaceOnUse" x1="935" y1="455" x2="1190" y2="530">
          <stop offset="0" stopColor="#4247c4" />
          <stop offset="0.3" stopColor="#7b7dcb" />
          <stop offset="0.6" stopColor="#a7a7d0" />
          <stop offset="1" stopColor="#d2d2d2" />
        </linearGradient>
        <clipPath id="handleClip"><path d={HANDLE} /></clipPath>
        <filter id="soft" filterUnits="userSpaceOnUse" x="780" y="560" width="180" height="260"><feGaussianBlur stdDeviation="3" /></filter>
      </defs>
      <GridLines />
      <g stroke="#333a47" strokeWidth="4" fill="none">
        <path d="M1108 372l18-18 18 18-18 18zM1128 386l14-13 13 13-13 13zM1146 370l14-13 13 13-13 13z" />
        <path d="M776 700l22-20 12 14M836 690l28-30 24 22-28 30zM880 650l20-18 16 20" opacity="0.600" />
      </g>

      <g stroke="#fff" strokeWidth="1.200" fill="none">
        <DimText x={697} y={589} a={-20} size={21}>圆心与切点的连线经过R35</DimText>
        <path d="M817 541l14-4L894 661" />
        <path d="M787 583l150-50M793.500 583v109M787 694l17-7M787 721l17-6M792 717v180M787 899l200-70" />
        <DimText x={784} y={640} a={-90}>70</DimText>
        <DimText x={782} y={810} a={-90}>115</DimText>
        <path d="M876.500 470v191M826 662h104M826 680l50-18M822 704l108-37M852 638l25 23" />
        <path d="M1075.600 846v27M1005 866l71-20M1005 892l71-23" />
        <DimText x={1041} y={846} a={-18}>40</DimText>
        <DimText x={1010} y={881} a={-18}>75</DimText>
        <path d="M1332 518l79-28M1357.500 503v46M1370.500 499v47M1386.500 520v67M1358 553l34-12M1358 560l35-13" />
        <ellipse cx="1358" cy="553" rx="13" ry="7" transform="rotate(-20 1358 553)" />
        <DimText x={1404} y={483} a={-18} size={18}>7</DimText>
        <DimText x={1376} y={583} a={-90} size={18}>4</DimText>
      </g>
      <Arrow x={793.5} y={583} a={-90} />
      <Arrow x={793.5} y={692} a={90} />
      <Arrow x={792} y={718} a={-90} />
      <Arrow x={792} y={897} a={90} />
      <Arrow x={894} y={661} a={62} />
      <Arrow x={1006} y={866} a={164} />
      <Arrow x={1076} y={869} a={-17} />
      <Arrow x={1357} y={509} a={-20} />
      <Arrow x={1371} y={504} a={160} />
      <Arrow x={1386.5} y={542} a={90} />
      <Arrow x={1386.5} y={548} a={-90} />

      <path d={BODY} fill="url(#body)" stroke="#fff" strokeWidth="1.500" />
      <path d="M936 533C930 560 927 590 927 620C927 650 932 690 942 723" stroke="#fff" fill="none" />
      <ellipse cx="1076" cy="483" rx="161" ry="101" fill="#eeedda" stroke="#fff" strokeWidth="1.500" />
      <ellipse cx="1076" cy="484" rx="158" ry="98" fill="none" stroke="#d0cfd8" strokeWidth="2" />
      <ellipse cx="1076" cy="483" rx="150" ry="92" fill="url(#inside)" stroke="#fff" strokeWidth="2" />

      <path d={HANDLE} fill="#e6e4dc" />
      <g clipPath="url(#handleClip)">
        <path d="M840 614C812 640 804 668 806 700" stroke="#f6f2cf" strokeWidth="12" fill="none" filter="url(#soft)" />
        <path d="M934 616H907C880 616 860 630 845 650C826 675 820 690 823 722C825 745 836 762 862 780" stroke="#6267cf" strokeWidth="9" fill="none" filter="url(#soft)" />
        <path d="M905 588h35v30h-35z" fill="#9fa0d2" opacity="0.600" filter="url(#soft)" />
        <path d="M825 770L860 800" stroke="#8b8ed6" strokeWidth="22" filter="url(#soft)" />
      </g>
      <path d={HANDLE} fill="none" stroke="#fff" strokeWidth="1.500" />
      <path d="M899 592q8 10 5 21M809 661q6 10 18 9" stroke="#fff" fill="none" />
      <path d="M826.500 608v78" stroke="#7f84e0" />
      <path d="M792 622l52 56" stroke="#4c7f68" />
      <path d="M795 669l93-31" stroke="#c98a92" />

      <g stroke="#fff" strokeWidth="1.200" fill="none">
        <path d="M804 596l32 29" />
        <path d="M787 583L1121 464.500M876.500 474L1075.600 403M876.500 470v30M937.500 495L1075.600 446M937.500 489v38M1075.600 397v178M1117 466v106M995.600 510q0 26-4 48" />
        <DimText x={976} y={429} a={-19}>115</DimText>
        <DimText x={1006} y={462} a={-19}>80</DimText>
        <DimText x={981} y={550} a={-70} size={16}>5°</DimText>
        <DimText x={820} y={599} a={48} size={19}>R35</DimText>
      </g>
      <Arrow x={877} y={474} a={160} />
      <Arrow x={1075.6} y={403} a={-20} />
      <Arrow x={938} y={495} a={160} />
      <Arrow x={1075.6} y={446} a={-20} />
      <Arrow x={1117} y={466} a={-90} />
      <Arrow x={995.6} y={510} a={-88} />
      <Arrow x={836} y={625} a={45} />

      {/* UCS icon */}
      <g fill="none">
        <path d="M19 880L55 921" stroke="#2d8a3a" strokeWidth="8" />
        <path d="M19 879L55 920" stroke="#6cc06c" strokeWidth="3" />
        <path d="M58 921l62-22" stroke="#c4524e" strokeWidth="8" />
        <path d="M58 920l62-22" stroke="#e68a84" strokeWidth="3" />
        <path d="M56 863v60" stroke="#2a4f94" strokeWidth="9" />
        <path d="M55 863v60" stroke="#4a78c8" strokeWidth="3" />
      </g>
      <g fontFamily="'Open Sans', sans-serif" fontWeight="300" fontSize="26" textAnchor="middle">
        <text x="62" y="858" fill="#2f6fd8">Z</text>
        <text x="24" y="876" fill="#35a045">Y</text>
        <text x="124" y="892" fill="#d8433c">X</text>
      </g>
      <path d="M982 577v25l6-6 6 12 5-2-6-12h8z" fill="#fff" stroke="#222" />
    </svg>
  );
}

function ViewCube() {
  return (
    <svg viewBox="1765 330 130 120" className="absolute top-[34px] right-[19px] h-[120px] w-[130px]" aria-label="ViewCube">
      <ellipse cx="1835" cy="398" rx="53" ry="36" fill="none" stroke="#47505f" strokeWidth="11" />
      <path d="M1804 352l39-13 24 22-41 15z" fill="#c9c9c9" />
      <path d="M1804 352l22 24 1 35-21-25z" fill="#a5a5a5" />
      <path d="M1826 376l41-15-3 35-37 15z" fill="#bdbdbd" />
      <path d="M1804 352l22 24 41-15M1826 376l1 35" stroke="#555" strokeDasharray="5 2" fill="none" />
      <g fontFamily="'Noto Sans CJK SC', sans-serif" textAnchor="middle" dominantBaseline="central" fill="#444">
        <text transform="translate(1838 357) rotate(-15)" fontSize="16">上</text>
        <text transform="translate(1847 386) rotate(-14)" fontSize="21">前</text>
        <text transform="translate(1815 381) rotate(42)" fontSize="14">左</text>
        <g fill="#b4b8c0">
          <text transform="translate(1784 415) rotate(-15)" fontSize="18">西</text>
          <text transform="translate(1868 431) rotate(-35)" fontSize="18">南</text>
          <text transform="translate(1880 377) rotate(-30)" fontSize="16">东</text>
        </g>
      </g>
    </svg>
  );
}

function NavBar() {
  return (
    <div className="absolute top-[220px] right-1 flex h-[311px] w-[46px] flex-col items-center rounded-sm border border-[#6a707a] bg-[#80858d]/60 text-[#41464f]">
      <Ico className="mt-[2px] mr-[2px] size-3 self-end"><circle cx="12" cy="12" r="10" stroke="#4a5059" strokeWidth="3" /></Ico>
      <button type="button" aria-label="导航控制盘" className="mt-2">
        <Ico className="size-[34px]"><g stroke="#4a5059" strokeWidth="1.500"><path d="M12 1h10v10a10 11 0 11-10-10z" /><circle cx="12" cy="12" r="6" /><path d="M16 16l4 4M8 16l-4 4" /></g></Ico>
      </button>
      <Caret className="mt-3 w-2" />
      <button type="button" aria-label="平移" className="mt-4"><Hand className="size-[34px]" strokeWidth={1.5} /></button>
      <button type="button" aria-label="缩放" className="mt-[6px]">
        <Ico className="size-[36px]"><g stroke="#4a5059" strokeWidth="1.500"><path d="M1 1l12 12M16 2L2 15M1 5V1h4M12 2h4v4M1 12v4h4" /><circle cx="17" cy="15" r="4" /><path d="M20 18l4 5" strokeWidth="2.500" /></g></Ico>
      </button>
      <Caret className="mt-[9px] w-2" />
      <button type="button" aria-label="动态观察" className="mt-[9px]">
        <Ico className="size-[34px]"><g stroke="#4a5059" strokeWidth="1.500"><path d="M10 22V8H7l5-7 5 7h-3v14z" /><path d="M7 10Q1 12 1 14q2 4 11 4t11-4q0-3-6-4" /><path d="M3 14l4-1v6z" fill="#4a5059" /></g></Ico>
      </button>
      <Caret className="mt-[9px] w-2" />
      <button type="button" aria-label="ShowMotion" className="mt-3">
        <Ico className="size-[34px]"><g stroke="#4a5059" strokeWidth="1.500"><path d="M1 1h6v6H1zM9 1h6v6H9zM17 1h6v6h-6zM1 10h15v12H1z" /><path d="M6 13v6l5-3z" fill="#4a5059" /></g></Ico>
      </button>
      <Ico className="mt-auto mr-[2px] mb-[2px] size-3 self-end"><circle cx="12" cy="12" r="10" stroke="#4a5059" strokeWidth="3" /><path d="M7 12h10" stroke="#4a5059" strokeWidth="3" /></Ico>
    </div>
  );
}

function SogouBar() {
  return (
    <div className="absolute top-[559px] right-[18px] flex h-[37px] w-[300px] items-center bg-white pl-[38px] text-[#2a6fc0]">
      <svg viewBox="0 0 44 42" className="absolute -top-[3px] -left-[12px] w-[44px]" aria-hidden="true">
        <path d="M2 8Q1 5 4 4L33 0q4 0 4 3l7 29q0 3-3 4L13 42q-3 0-4-3z" fill="#f25b22" />
        <path d="M33 9Q10 8 12 17c2 6 20 1 20 9 0 6-12 8-20 7" stroke="#fff" strokeWidth="6" fill="none" />
      </svg>
      <span className="w-[24px] text-center font-['Noto_Sans_CJK_SC',sans-serif] text-[22px] leading-none font-bold">中</span>
      <span className="w-[43px] text-center text-[22px] leading-none font-bold">°,</span>
      <Smile className="size-[25px]" strokeWidth={2.4} />
      <Mic className="ml-2 size-[25px]" strokeWidth={2.6} />
      <Ico className="ml-2 size-[25px]">
        <rect x="1" y="3" width="22" height="18" rx="2" fill="#2a6fc0" stroke="none" />
        <path d="M4 8h16M4 12h16" stroke="#fff" strokeWidth="2.500" strokeDasharray="2 1.500" />
        <path d="M6 17h12" stroke="#fff" strokeWidth="2" />
      </Ico>
      <span className="relative ml-[9px] flex h-[25px] w-[28px] items-end justify-end text-[13px] leading-none font-bold text-[#9aa2ba]">
        <Ico className="absolute top-0 left-0 size-[24px]"><g fill="#aab0c6" stroke="none"><circle cx="9" cy="6" r="5" /><path d="M0 22q0-10 9-10t6 10z" /></g></Ico>
        <span className="relative bg-white/70">15</span>
      </span>
      <Ico className="ml-[5px] size-[24px]"><path d="M1 5l7-3q4 4 8 0l7 3-2 7h-3v11H6V12H3z" fill="#2a6fc0" stroke="none" /></Ico>
      <Ico className="ml-[9px] size-[22px]"><path d="M1 1h10v10H1zM1 13h10v10H1zM13 13h10v10H13z" fill="#2a6fc0" stroke="none" /><rect x="14.500" y="2" width="7" height="8" rx="2" stroke="#2a6fc0" strokeWidth="2.500" /></Ico>
    </div>
  );
}

const editOptions = [
  { name: "压印", key: "I" },
  { name: "分割实体", key: "P" },
  { name: "抽壳", key: "S" },
  { name: "清除", key: "L" },
  { name: "检查", key: "C" },
  { name: "放弃", key: "U" },
  { name: "退出", key: "X" },
];

function OptionMenu() {
  return (
    <>
      <p className="absolute top-[388px] left-[843px] h-[35px] w-[153px] border-2 border-black bg-[#979797] pl-1 text-[18px] leading-[29px] whitespace-nowrap text-black">
        输入体编辑选项
      </p>
      <ul className="absolute top-[427px] left-[843px] z-20 w-[154px] border border-[#777] bg-white text-[18px] leading-[30px] text-[#777]">
        {editOptions.map(({ name, key }) => (
          <li key={key} className="relative border-b border-[#777] last:border-b-0">
            <button type="button" className="w-full pl-8 text-left">
              {name}({key})
            </button>
            {key === "X" && <span className="absolute top-[9px] left-[7px] size-[10px] rounded-full bg-black" />}
          </li>
        ))}
      </ul>
    </>
  );
}

function CommandLine() {
  return (
    <>
      <div className="absolute bottom-[43px] left-[475px] flex flex-col items-start gap-[6px] text-[20px] leading-[25px] whitespace-nowrap">
        <span className="rounded-xs bg-[#53565c] px-[3px] text-[#a8a8a8]">
          选择三维实体<span className="font-['Liberation_Mono',monospace]">:</span>
        </span>
        <span className="rounded-xs bg-[#5a5d63] px-[3px] text-[#ececec]">输入体编辑选项</span>
      </div>
      <div className="absolute right-[370px] bottom-px left-[383px] flex h-[39px] rounded-sm border-2 border-[#777] bg-white font-['Liberation_Mono','Noto_Sans_CJK_SC',monospace] text-[18px] text-black">
        <div className="flex w-[80px] shrink-0 items-center bg-linear-to-b from-[#777] to-[#3c3c3c] pl-[10px] text-white">
          <span className="h-[27px] border-l-2 border-dotted border-[#aaa]" />
          <button type="button" aria-label="关闭命令行" className="ml-[9px]">
            <Ico className="size-4"><path d="M3 2l18 20M21 2L3 22" stroke="#fff" strokeWidth="4.500" /></Ico>
          </button>
          <button type="button" aria-label="自定义" className="ml-[14px]"><Wrench className="size-6 -scale-x-100" fill="#e5e5e5" strokeWidth={1} /></button>
        </div>
        <div className="flex min-w-0 flex-1 items-center pl-[8px] whitespace-nowrap">
          <Ico className="size-[22px]"><path d="M1 3h6v18H1z" fill="#d5dbe2" stroke="none" /><path d="M6 5l4-4h9l-3 4z" fill="#b5dcff" stroke="none" /><path d="M6 5h10v17H6z" fill="#7cc0fb" stroke="none" /><path d="M16 5l3-4v8l-2 2v4l2-1v5l-3 3z" fill="#4a90d0" stroke="none" /></Ico>
          <Caret className="ml-[2px] w-[9px] text-[#888]" />
          <b className="ml-3">SOLIDEDIT</b>
          <span className="ml-3">[</span>
          {editOptions.map(({ name, key }) => (
            <button key={key} type="button" className="mr-[6px] flex h-8 items-center rounded-md bg-[#d2d2d2] px-[2px] last-of-type:mr-[3px]">
              <span className="text-[20px]">{name}</span>(<b className="text-[#1414d8]">{key}</b>)
            </button>
          ))}
          <label htmlFor="command" className="flex items-center">
            ]<span className="ml-[11px]">&lt;</span><span className="text-[20px]">退出</span>&gt;:
          </label>
          <input id="command" className="min-w-0 flex-1 outline-none" />
          <Caret className="mr-[5px] w-[11px] rotate-180" />
        </div>
      </div>
    </>
  );
}

function Viewport() {
  const bars = Array.from({ length: 24 }, (_, i) => i);
  return (
    <main className="flex min-h-[676px] flex-1 bg-[#212733]">
      <div className="relative min-w-0 flex-1 overflow-hidden">
        <Drawing />
        <p className="absolute top-[4px] left-[2px] text-[18px] leading-[28px] text-[#e8e8e8]">[−][自定义视图][概念]</p>
        <ViewCube />
        <label className="absolute top-[162px] right-[37px] flex h-[26px] w-[84px] items-center rounded-md border border-[#bfc3cc] bg-[#a2a7b3] pl-[5px]">
          <select aria-label="命名 UCS" className="min-w-0 flex-1 appearance-none bg-transparent text-[15px] leading-none text-[#4a4e58] outline-none">
            <option>未 命 名</option>
          </select>
          <Caret className="mr-[6px] w-3 text-[#d4d7dd]" />
        </label>
        <NavBar />
        <SogouBar />
        <CommandLine />
        <OptionMenu />
      </div>
      <div className="relative w-[14px] shrink-0 border-r-4 border-[#3d3a3c] bg-[#b9cdef]">
        <div className="absolute top-[43px] left-0 flex h-[89px] w-[14px] flex-col items-end justify-center gap-px rounded-l-md bg-[#3a4664] pr-[2px]">
          {bars.map((i) => (
            <span key={i} className={`h-[2px] w-[7px] ${i < 10 ? "bg-[#252c44]" : i < 16 ? "bg-[#c4c45c]" : i < 20 ? "bg-[#7fbd74]" : "bg-[#58b3a8]"}`} />
          ))}
        </div>
      </div>
    </main>
  );
}

/* ---------- footer ---------- */

function LayoutTabs() {
  return (
    <div className="flex h-[29px] items-start border-t-2 border-[#555] bg-[#393939] pl-[10px] text-[18px] leading-[25px] text-[#b8b8b8]">
      <button
        type="button"
        className="h-[26px] w-[82px] bg-linear-to-b from-[#4a4a4a] to-[#8c8c8c] font-bold text-white [clip-path:polygon(0_0,100%_0,calc(100%-8px)_80%,calc(100%-15px)_100%,15px_100%,8px_80%)]"
      >
        模型
      </button>
      <button type="button" className="-ml-[4px] h-[26px] w-[86px] bg-[#525252] [clip-path:polygon(0_0,100%_0,calc(100%-8px)_80%,calc(100%-15px)_100%,15px_100%,8px_80%)]">布局1</button>
      <button type="button" className="-ml-[4px] h-[26px] w-[86px] bg-[#525252] [clip-path:polygon(0_0,100%_0,calc(100%-8px)_80%,calc(100%-15px)_100%,15px_100%,8px_80%)]">布局2</button>
      <button type="button" aria-label="新布局" className="ml-[2px] flex h-[24px] w-[34px] items-center justify-center rounded-tl-lg rounded-br-xl bg-[#505050]">
        <Ico className="size-3"><path d="M12 0v24M0 12h24" stroke="#ccc" strokeWidth="6" /></Ico>
      </button>
    </div>
  );
}

function StatusButton({ label, on, className, children }: { label: string; on?: boolean; className: string; children: ReactNode }) {
  return (
    <button
      type="button"
      aria-label={label}
      aria-pressed={on}
      className={`flex shrink-0 items-center justify-center ${on ? "bg-[#5f8fc8]" : ""} ${className}`}
    >
      {children}
    </button>
  );
}

const Sep = () => <span className="w-[2px] shrink-0 bg-[#757575]" />;
const DoubleSep = () => <span className="mx-px w-[4px] shrink-0 border-x border-[#777] bg-[#3c3c3c]" />;
const More = ({ className = "w-[24px]", label }: { className?: string; label: string }) => (
  <StatusButton label={label} className={className}><Caret className="w-[10px]" /></StatusButton>
);

const Compass = ({ extra }: { extra?: ReactNode }) => (
  <Ico>
    <path d="M11 0l3 13 8 9-8-2-3-4-3 4-8 2 7-9z" fill="#ececec" stroke="none" />
    {extra}
  </Ico>
);

function StatusBar() {
  return (
    <footer className="flex h-[41px] overflow-hidden border-t-2 border-b-2 border-t-[#7a7a7a] border-b-black bg-[#4d4d4d] text-[18px] leading-none text-white">
      <output className="ml-[19px] flex w-[276px] shrink-0 items-center justify-end border-x-2 border-[#777] pr-2 text-[17px] font-semibold whitespace-nowrap">
        343.4079, 192.7841, 0.0000
      </output>
      <button type="button" className="w-[47px] shrink-0 border-r-2 border-[#777] pl-px font-bold whitespace-nowrap">模型</button>
      <StatusButton label="栅格" on className="ml-[2px] w-[35px]"><Ico><path d="M6 0v24M12 0v24M18 0v24M0 6h24M0 12h24M0 18h24" stroke="#fff" /></Ico></StatusButton>
      <StatusButton label="捕捉" className="w-[36px]"><Ico className="size-5"><path d="M2 4h22M2 12h22M2 20h22" stroke="#fff" strokeWidth="3.500" strokeDasharray="3.500 5" /></Ico></StatusButton>
      <More label="捕捉选项" />
      <DoubleSep />
      <StatusButton label="推断约束" className="w-[35px]"><Ico><path d="M1 14h9v9H1z" fill="#ddd" /><path d="M12 16V1h11v8H12" /></Ico></StatusButton>
      <Sep />
      <StatusButton label="动态输入" on className="w-[35px]"><Ico><path d="M6 1v12M0 7h12" stroke="#fff" /><path d="M9 16h14v7H9z" fill="#fff" stroke="#fff" /><path d="M10 17h4v5h-4z" fill="#333" stroke="none" /></Ico></StatusButton>
      <Sep />
      <StatusButton label="正交" className="w-[36px]"><Ico><path d="M1 0v23h23M1 15h7v8" /></Ico></StatusButton>
      <StatusButton label="极轴追踪" on className="w-[35px]"><Ico><circle cx="10" cy="13" r="9" stroke="#fff" /><path d="M10 14L20 0M10 14h14M17 7l4 7" stroke="#fff" /></Ico></StatusButton>
      <More label="极轴选项" />
      <StatusButton label="等轴测草图" className="w-[34px]"><Ico><path d="M11 0v24" stroke="#5cb98c" /><path d="M3 2l16 20" stroke="#e2737d" /><path d="M9 10h4v4H9z" fill="#4d4d4d" /></Ico></StatusButton>
      <More label="等轴测选项" />
      <StatusButton label="对象捕捉追踪" on className="w-[36px]"><Ico><path d="M24 2L1 23h23" stroke="#fff" /><path d="M8 13h4v4H8z" fill="#fff" stroke="none" /></Ico></StatusButton>
      <Sep />
      <StatusButton label="对象捕捉" on className="w-[34px]"><Ico><path d="M6 3h17v20H3V6" stroke="#fff" /><path d="M0 0h6v6H0z" stroke="#fff" /></Ico></StatusButton>
      <More label="捕捉模式" />
      <Sep />
      <StatusButton label="线宽" className="w-[36px]"><Ico><path d="M0 4h24M0 12h24M0 20h24" /><path d="M0 4h14M0 12h14M0 20h14" strokeWidth="3.500" /></Ico></StatusButton>
      <Sep />
      <StatusButton label="透明度" on className="w-[35px]"><Ico><path d="M1 1h22v22H1z" stroke="#fff" /><path d="M2 4h20M2 12h20M2 20h20" stroke="#fff" strokeWidth="4" strokeDasharray="4 4" /><path d="M6 8h16M6 16h16" stroke="#fff" strokeWidth="4" strokeDasharray="4 4" /></Ico></StatusButton>
      <StatusButton label="选择循环" className="w-[39px]"><Ico><path d="M4 0v8M0 4h8M8 20V5h13" /><path d="M10 8h14v16H10z" fill="#7fcf9f" stroke="none" /></Ico></StatusButton>
      <Sep />
      <StatusButton label="三维对象捕捉" className="w-[35px]"><Ico><path d="M5 7h13v14H8M5 7v10M5 7l6-6h12v13l-5 7M18 7l5-6" /><path d="M0 18h6v6H0z" stroke="#f08070" fill="#4d4d4d" /></Ico></StatusButton>
      <More label="三维捕捉选项" className="w-[22px]" />
      <DoubleSep />
      <StatusButton label="动态 UCS" on className="w-[35px]"><Ico><path d="M4 3v18h18" stroke="#fff" /><path d="M1 5l3-5 3 5zM19 18l5 3-5 3z" fill="#fff" stroke="none" /><path d="M15 4l-5 7h4l-1 6 5-8h-4z" fill="#fff" stroke="none" /></Ico></StatusButton>
      <StatusButton label="选择过滤" className="w-[38px]"><Ico><path d="M1 7h16v16H1zM1 7l6-6h16v15l-6 7M17 7l6-6" /><path d="M1 8h16" stroke={BLUE} strokeWidth="2" /></Ico></StatusButton>
      <More label="过滤选项" className="w-[20px]" />
      <StatusButton label="小控件" on className="w-[35px]"><Ico><path d="M12 4l8 5v9l-8 5-8-5V9zM12 4v9l-9 6M12 13l9 6M10 1h4v4h-4zM1 17h4v4H1zM19 17h4v4h-4zM10 12h4v4h-4z" stroke="#fff" /></Ico></StatusButton>
      <More label="小控件选项" className="w-[22px]" />
      <DoubleSep />
      <StatusButton label="注释可见性" on className="w-[35px]"><Compass extra={<circle cx="20" cy="5" r="4" stroke="#fff" />} /></StatusButton>
      <StatusButton label="自动缩放" className="w-[37px]"><Compass extra={<path d="M21 0l-6 7h4l-2 5 6-7h-4z" fill="#fff" stroke="none" />} /></StatusButton>
      <StatusButton label="注释监视" className="w-[36px]"><Compass /></StatusButton>
      <button type="button" className="flex w-[107px] shrink-0 items-center justify-center gap-[6px] text-[17px] whitespace-nowrap">
        1:1 / 100% <Caret className="w-[10px]" />
      </button>
      <DoubleSep />
      <StatusButton label="切换工作空间" className="w-[37px]">
        <Ico><circle cx="12" cy="12" r="6.500" strokeWidth="5" /><circle cx="12" cy="12" r="10.500" strokeWidth="3" strokeDasharray="4.200 4.050" /></Ico>
      </StatusButton>
      <More label="工作空间选项" className="w-[21px]" />
      <Sep />
      <StatusButton label="添加" className="w-[37px]"><Ico><path d="M12 0v24M0 12h24" strokeWidth="2" /></Ico></StatusButton>
      <DoubleSep />
      <StatusButton label="单位" className="w-[35px]"><Ico><path d="M6 1h12v3h-6v2h6v2h-6v3h6v2h-6v3h6v2h-6v3h6v2H6z" fill="#ddd" stroke="none" /></Ico></StatusButton>
      <label className="flex w-[110px] shrink-0 items-center pl-[8px]">
        <select aria-label="单位格式" className="min-w-0 flex-1 appearance-none bg-transparent font-semibold outline-none">
          <option>小数</option>
        </select>
        <Caret className="mr-[6px] w-[10px]" />
      </label>
      <Sep />
      <StatusButton label="快捷特性" className="w-[36px]"><Ico><path d="M4 1h17v22H4zM4 4h17M7 9h2M7 14h2M7 19h2M11 9h8M11 14h8M11 19h8" strokeWidth="1.500" /></Ico></StatusButton>
      <DoubleSep />
      <StatusButton label="锁定用户界面" className="w-[36px]"><Ico><path d="M9 21H1V1h21v9M1 4h21M17 14v-1q0-3 3-3t3 3v2" /><path d="M10 15h10v9H10z" fill="#eee" stroke="none" /></Ico></StatusButton>
      <More label="锁定选项" className="w-[22px]" />
      <Sep />
      <StatusButton label="隔离对象" className="w-[35px]"><Ico><path d="M1 1h9v9H1zM10 14l6 9H4z" /><circle cx="18" cy="12" r="5" /></Ico></StatusButton>
      <DoubleSep />
      <StatusButton label="图形性能" on className="w-[35px]"><Ico><circle cx="12" cy="12" r="11" stroke="#fff" /><path d="M10 15L19 5l-6 12z" fill="#fff" stroke="#fff" /></Ico></StatusButton>
      <DoubleSep />
      <StatusButton label="图纸" className="w-[38px]"><Ico className="size-8"><path d="M1 1h17l4 5v17H1z" fill="#5fa8e6" stroke="none" /><path d="M17 0l6 6h-6z" fill="#fff" stroke="none" /><path d="M7 1v14M1 10h16M4 7h6v6H4z" stroke="#fff" /><path d="M1 17q9-3 14 6H1z" fill="#f2c230" stroke="none" /><path d="M14 19l4 4 6-8" stroke="#2a9448" strokeWidth="3" /></Ico></StatusButton>
      <StatusButton label="外部参照" className="w-[45px]"><Ico><path d="M1 1h21v19H1z" fill="#e8e8e8" stroke="none" /><path d="M2 18L7 6l5 8 7-12" stroke="#333" /><Node x={7} y={5} c="#2a6fc0" /><path d="M17 10l7 14H10z" fill="#e8772e" stroke="none" /></Ico></StatusButton>
      <DoubleSep />
      <StatusButton label="全屏显示" className="w-[35px]"><Ico><path d="M1 3h22v18H1zM14 7h5v5M19 7l-5 5M10 17H5v-5M5 17l5-5" strokeWidth="1.500" /></Ico></StatusButton>
      <StatusButton label="自定义" className="min-w-[30px] flex-1"><Ico><path d="M0 3h24M0 12h24M0 21h24" strokeWidth="2.500" /></Ico></StatusButton>
    </footer>
  );
}

export default function App() {
  return (
    <div className="flex min-h-screen flex-col bg-[#f4f4f4] px-2 pt-2 pb-[9px] font-['Open_Sans','Noto_Sans_CJK_SC',sans-serif]">
      <div className="flex flex-1 flex-col shadow-[0_0_6px_2px_#777]">
        <Header />
        <RibbonTabs />
        <Ribbon />
        <FileTabs />
        <Viewport />
        <LayoutTabs />
        <StatusBar />
      </div>
    </div>
  );
}
